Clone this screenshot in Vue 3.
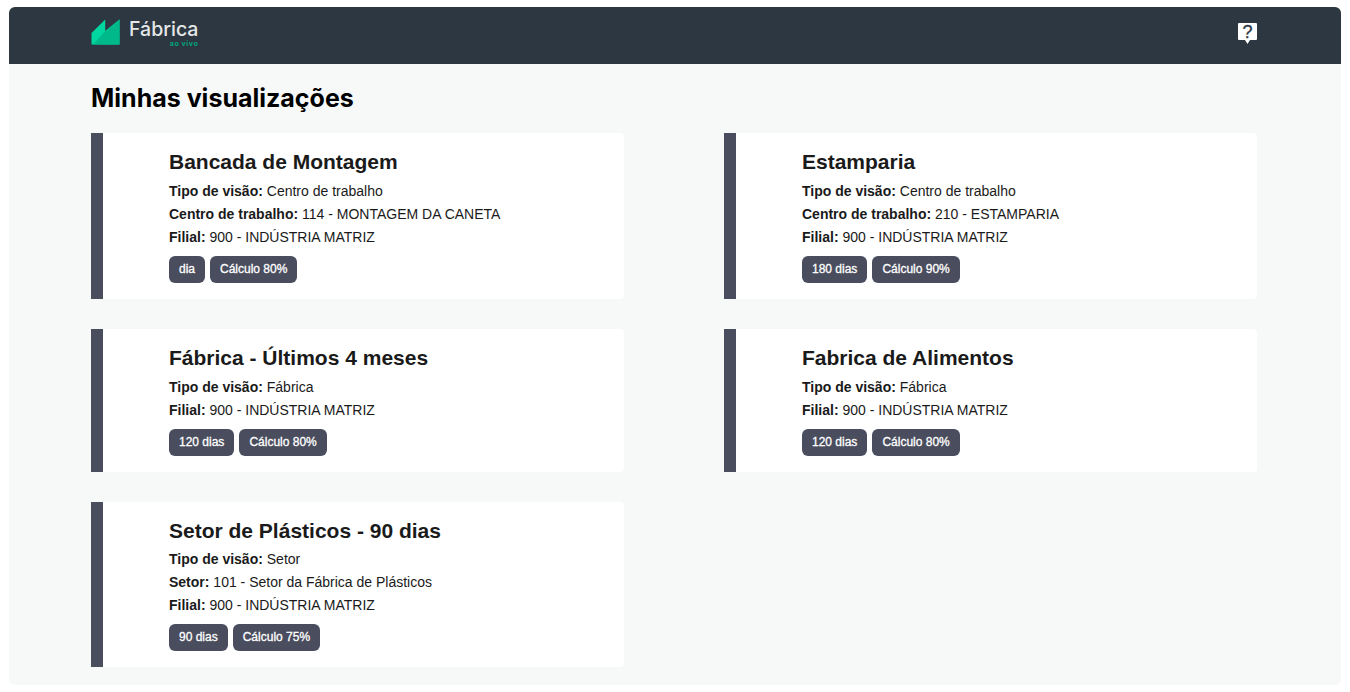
<template>
  <div class="page">
    <!-- top bar -->
    <header class="topbar">
      <div class="logo">
        <svg class="logo-mark" width="29" height="26" viewBox="0 0 29 26">
          <path d="M0.5 25.5 V14 L14.2 0.5 V12 L28.5 0.5 V25.5 Z" fill="#00d6a0" />
          <path d="M2 25.5 L14.2 12 L28.5 0.5 V25.5 Z" fill="#00b98a" />
        </svg>
        <div class="logo-text">
          <span class="logo-name">Fábrica</span>
          <span class="logo-sub">ao vivo</span>
        </div>
      </div>
      <svg class="help" width="19" height="22" viewBox="0 0 19 22">
        <path d="M1 0 H18 A1 1 0 0 1 19 1 V16 A1 1 0 0 1 18 17 H12 L9.5 21 L7 17 H1 A1 1 0 0 1 0 16 V1 A1 1 0 0 1 1 0 Z" fill="#fff" />
        <text x="9.5" y="15" text-anchor="middle" class="help-mark">?</text>
      </svg>
    </header>

    <main class="content">
      <h1>Minhas visualizações</h1>
      <div class="cards">
        <div v-for="card in cards" :key="card.title" class="card">
          <h2>{{ card.title }}</h2>
          <p v-for="line in card.lines" :key="line[0]"><b>{{ line[0] }}:</b> {{ line[1] }}</p>
          <div class="tags">
            <span v-for="tag in card.tags" :key="tag" class="tag">{{ tag }}</span>
          </div>
        </div>
      </div>
    </main>
  </div>
</template>

<script setup>
const matriz = ['Filial', '900 - INDÚSTRIA MATRIZ']

const cards = [
  {
    title: 'Bancada de Montagem',
    lines: [['Tipo de visão', 'Centro de trabalho'], ['Centro de trabalho', '114 - MONTAGEM DA CANETA'], matriz],
    tags: ['dia', 'Cálculo 80%']
  },
  {
    title: 'Estamparia',
    lines: [['Tipo de visão', 'Centro de trabalho'], ['Centro de trabalho', '210 - ESTAMPARIA'], matriz],
    tags: ['180 dias', 'Cálculo 90%']
  },
  {
    title: 'Fábrica - Últimos 4 meses',
    lines: [['Tipo de visão', 'Fábrica'], matriz],
    tags: ['120 dias', 'Cálculo 80%']
  },
  {
    title: 'Fabrica de Alimentos',
    lines: [['Tipo de visão', 'Fábrica'], matriz],
    tags: ['120 dias', 'Cálculo 80%']
  },
  {
    title: 'Setor de Plásticos - 90 dias',
    lines: [['Tipo de visão', 'Setor'], ['Setor', '101 - Setor da Fábrica de Plásticos'], matriz],
    tags: ['90 dias', 'Cálculo 75%']
  }
]
</script>

<style>
body {
  background: #fff;
}
</style>

<style scoped>
.page {
  margin: 7px 9px;
  height: 678px;
  border-radius: 6px;
  overflow: hidden;
  background: #f7f9f9;
  font-family: "Liberation Sans", Arial, sans-serif;
  color: #1a1a1a;
}

/* top bar */
.topbar {
  height: 57px;
  background: #2d3741;
  display: flex;
  justify-content: space-between;
  align-items: flex-start;
  padding: 0 84px 0 82px;
  box-sizing: border-box;
}
.logo {
  display: flex;
  align-items: flex-start;
  padding-top: 12px;
}
.logo-text {
  margin-left: 9px;
  display: flex;
  flex-direction: column;
  align-items: flex-end;
}
.logo-name {
  font-family: Inter, sans-serif;
  font-size: 19.5px;
  line-height: 21px;
  font-weight: 500;
  color: #e4e7e8;
}
.logo-sub {
  font-family: Inter, sans-serif;
  font-size: 7px;
  line-height: 7px;
  letter-spacing: 0.6px;
  font-weight: 700;
  color: #00a57c;
}
.help {
  margin-top: 16px;
}
.help-mark {
  font-family: "Liberation Sans", Arial, sans-serif;
  font-size: 18px;
  fill: #2d3741;
  stroke: #2d3741;
  stroke-width: 0.3;
}

/* content */
.content {
  padding: 0 84px 0 82px;
}
h1 {
  margin: 0;
  padding: 18px 0 19px;
  font-family: Inter, sans-serif;
  font-size: 25px;
  line-height: 32px;
  font-weight: 700;
  color: #000;
}
.cards {
  display: grid;
  grid-template-columns: 533px 533px;
  column-gap: 100px;
  row-gap: 30px;
}
.card {
  background: #fff;
  border-left: 12px solid #4a4d5e;
  border-radius: 0 4px 4px 0;
  padding: 16px 20px 16.05px 66px;
}
h2 {
  margin: 0 0 4.75px;
  font-size: 21px;
  line-height: 26px;
  font-weight: 700;
  color: #1a1a1a;
}
p {
  margin: 0;
  font-size: 14px;
  line-height: 23px;
}
.tags {
  display: flex;
  gap: 5px;
  margin-top: 7px;
}
.tag {
  background: #4a4d5e;
  color: #fff;
  font-size: 12px;
  -webkit-text-stroke: 0.3px #fff;
  line-height: 27px;
  padding: 0 10px;
  border-radius: 6px;
}
</style>
